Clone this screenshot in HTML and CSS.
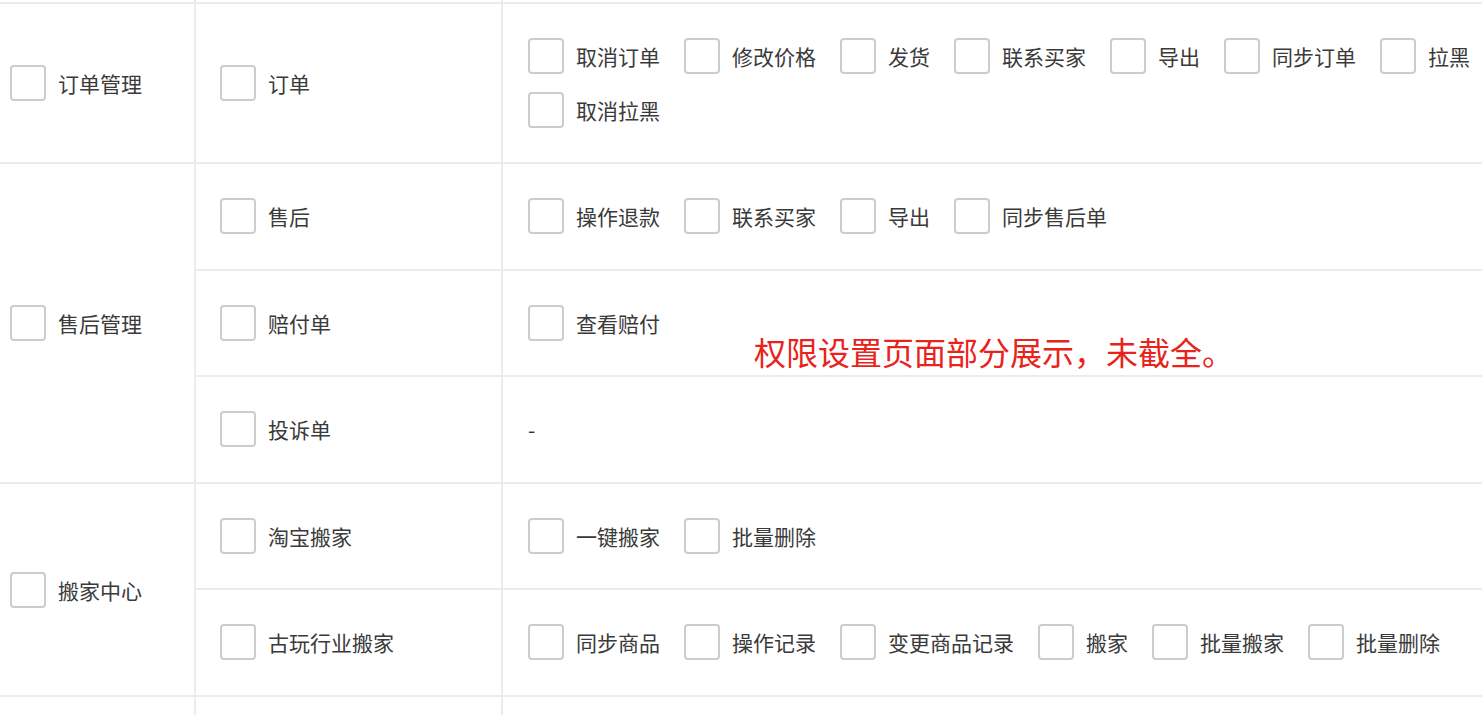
FILE: index.html
```html
<!DOCTYPE html>
<html lang="zh-CN">
<head>
<meta charset="utf-8">
<title>权限设置</title>
<link rel="stylesheet" href="styles.css">
</head>
<body>
<div class="page">
  <table class="perm">
    <colgroup>
      <col class="c1">
      <col class="c2">
      <col class="c3">
    </colgroup>
    <tbody>
      <tr class="cut">
        <td></td><td></td><td></td>
      </tr>
      <tr>
        <td class="lv1"><div class="items"><label class="item"><span class="box"></span><span class="txt">订单管理</span></label></div></td>
        <td class="lv2"><div class="items"><label class="item"><span class="box"></span><span class="txt">订单</span></label></div></td>
        <td class="lv3">
          <div class="items">
            <label class="item"><span class="box"></span><span class="txt">取消订单</span></label>
            <label class="item"><span class="box"></span><span class="txt">修改价格</span></label>
            <label class="item"><span class="box"></span><span class="txt">发货</span></label>
            <label class="item"><span class="box"></span><span class="txt">联系买家</span></label>
            <label class="item"><span class="box"></span><span class="txt">导出</span></label>
            <label class="item"><span class="box"></span><span class="txt">同步订单</span></label>
            <label class="item"><span class="box"></span><span class="txt">拉黑</span></label>
            <label class="item"><span class="box"></span><span class="txt">取消拉黑</span></label>
          </div>
        </td>
      </tr>
      <tr class="tall">
        <td class="lv1" rowspan="3"><div class="items"><label class="item"><span class="box"></span><span class="txt">售后管理</span></label></div></td>
        <td class="lv2"><div class="items"><label class="item"><span class="box"></span><span class="txt">售后</span></label></div></td>
        <td class="lv3">
          <div class="items">
            <label class="item"><span class="box"></span><span class="txt">操作退款</span></label>
            <label class="item"><span class="box"></span><span class="txt">联系买家</span></label>
            <label class="item"><span class="box"></span><span class="txt">导出</span></label>
            <label class="item"><span class="box"></span><span class="txt">同步售后单</span></label>
          </div>
        </td>
      </tr>
      <tr>
        <td class="lv2"><div class="items"><label class="item"><span class="box"></span><span class="txt">赔付单</span></label></div></td>
        <td class="lv3">
          <div class="items">
            <label class="item"><span class="box"></span><span class="txt">查看赔付</span></label>
          </div>
        </td>
      </tr>
      <tr class="tall">
        <td class="lv2"><div class="items"><label class="item"><span class="box"></span><span class="txt">投诉单</span></label></div></td>
        <td class="lv3"><div class="items"><span class="dash">-</span></div></td>
      </tr>
      <tr>
        <td class="lv1" rowspan="2"><div class="items"><label class="item"><span class="box"></span><span class="txt">搬家中心</span></label></div></td>
        <td class="lv2"><div class="items"><label class="item"><span class="box"></span><span class="txt">淘宝搬家</span></label></div></td>
        <td class="lv3">
          <div class="items">
            <label class="item"><span class="box"></span><span class="txt">一键搬家</span></label>
            <label class="item"><span class="box"></span><span class="txt">批量删除</span></label>
          </div>
        </td>
      </tr>
      <tr class="tall">
        <td class="lv2"><div class="items"><label class="item"><span class="box"></span><span class="txt">古玩行业搬家</span></label></div></td>
        <td class="lv3">
          <div class="items">
            <label class="item"><span class="box"></span><span class="txt">同步商品</span></label>
            <label class="item"><span class="box"></span><span class="txt">操作记录</span></label>
            <label class="item"><span class="box"></span><span class="txt">变更商品记录</span></label>
            <label class="item"><span class="box"></span><span class="txt">搬家</span></label>
            <label class="item"><span class="box"></span><span class="txt">批量搬家</span></label>
            <label class="item"><span class="box"></span><span class="txt">批量删除</span></label>
          </div>
        </td>
      </tr>
      <tr class="tail">
        <td></td><td></td><td></td>
      </tr>
    </tbody>
  </table>
  <div class="note">权限设置页面部分展示，未截全。</div>
</div>
</body>
</html>
```

FILE: styles.css
```css
html, body {
  margin: 0;
  padding: 0;
  background: #ffffff;
  overflow: hidden;
}

body {
  width: 1482px;
  height: 715px;
  font-family: "Noto Sans CJK SC", "Noto Sans", sans-serif;
  color: #333333;
}

.page {
  position: relative;
  width: 1482px;
  height: 715px;
  overflow: hidden;
}

.perm {
  border-collapse: collapse;
  table-layout: fixed;
  width: 1560px;
}

.c1 { width: 195px; }
.c2 { width: 307px; }
.c3 { width: auto; }

.perm td {
  border: 2px solid #ececec;
  padding: 34px 0 34px 0;
  vertical-align: middle;
  line-height: 0;
}

.perm tr.tall td {
  padding-bottom: 35px;
}

.perm td:first-child {
  border-left: none;
}

.perm tr.cut td {
  border-top: none;
  padding: 0;
  height: 2px;
}

.perm tr.tail td {
  border-bottom: none;
  height: 60px;
  padding: 0;
}

.lv1 { padding-left: 10px !important; }
.lv2 { padding-left: 24px !important; }
.lv3 { padding-left: 25px !important; }

.items {
  display: flex;
  flex-wrap: wrap;
  column-gap: 24px;
  row-gap: 18px;
  align-items: center;
  min-height: 36px;
}

.item {
  display: flex;
  align-items: center;
  gap: 12px;
  height: 36px;
  cursor: pointer;
}

.box {
  width: 32px;
  height: 32px;
  border: 2px solid #cccccc;
  border-radius: 4px;
  background: #ffffff;
  flex: none;
}

.txt {
  font-size: 21px;
  line-height: 36px;
  color: #3a3a3a;
  white-space: nowrap;
}

.dash {
  font-size: 21px;
  line-height: 36px;
  color: #333333;
}

.note {
  position: absolute;
  left: 754px;
  top: 335px;
  font-size: 32px;
  line-height: 1;
  color: #e8231b;
  white-space: nowrap;
  font-family: "Noto Sans CJK SC", sans-serif;
}
```
